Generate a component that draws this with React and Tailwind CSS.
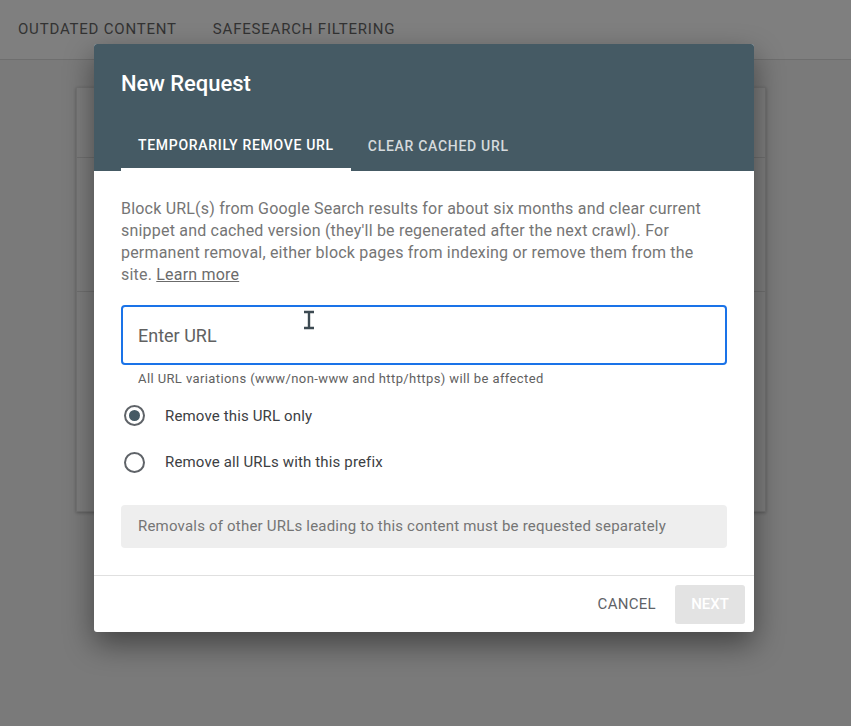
import React, { useState } from 'react';

function Radio({ checked, label, onClick }) {
  return (
    <button type="button" onClick={onClick} className="flex items-center text-left">
      <span className="w-[21px] h-[21px] rounded-full border-2 border-[#5f6368] flex items-center justify-center ml-[3px]">
        {checked && <span className="w-[11px] h-[11px] rounded-full bg-[#455a64]" />}
      </span>
      <span className="ml-[20px] text-[15px] tracking-[0.15px] text-[#3c4043]">{label}</span>
    </button>
  );
}

export default function App() {
  const [mode, setMode] = useState('url');

  return (
    <div
      className="relative w-[851px] h-[726px] overflow-hidden bg-[#7a7a7a]"
      style={{ fontFamily: 'Roboto, "Noto Sans", sans-serif' }}
    >
      {/* page behind the scrim */}
      <div className="h-[60px] bg-[#7f7f7f] border-b border-[#6e6e6e] flex items-center pl-[18px] gap-[36px] text-[15px] tracking-[0.8px] text-[#333333]">
        <span>OUTDATED CONTENT</span>
        <span>SAFESEARCH FILTERING</span>
      </div>
      <div className="ml-[76px] mt-[27px] w-[690px] h-[425px] bg-[#7e7e7e] border border-[#727272] shadow-[0_1px_3px_rgba(0,0,0,0.25)] flex flex-col">
        <div className="h-[70px] border-b border-[#707070]" />
        <div className="h-[134px] border-b border-[#707070]" />
        <div className="flex-1" />
      </div>

      {/* dialog */}
      <div className="absolute left-[94px] top-[44px] w-[660px] bg-white rounded-[3px] overflow-hidden shadow-[0_12px_30px_rgba(0,0,0,0.45)]">
        <div className="bg-[#455a64] pt-[26px] px-[27px]">
          <h2 className="text-[22px] leading-[28px] font-medium text-white">New Request</h2>
          <div className="mt-[21px] flex h-[52px] text-[14px] font-medium tracking-[0.7px]">
            <div className="px-[17px] flex items-center border-b-[3px] border-white text-white pt-[3px]">
              TEMPORARILY REMOVE URL
            </div>
            <div className="px-[17px] flex items-center text-[#d5dadd] pt-[3px]">
              CLEAR CACHED URL
            </div>
          </div>
        </div>

        <div className="px-[27px] pt-[27px] pb-[27px]">
          <p className="text-[16px] leading-[22px] tracking-[0.2px] text-[#757575]">
            Block URL(s) from Google Search results for about six months and clear current snippet and cached
            version (they'll be regenerated after the next crawl). For permanent removal, either block pages from
            indexing or remove them from the site. <a href="#" className="underline text-[#6b6b6b]">Learn more</a>
          </p>

          <div className="relative mt-[19px] h-[60px] border-2 border-[#1a73e8] rounded-[4px] flex items-center pl-[15px]">
            <input
              className="w-full h-full outline-none text-[18px] text-[#202124] placeholder:text-[#616161] bg-transparent"
              placeholder="Enter URL"
            />
            {/* mouse I-beam */}
            <svg className="absolute left-[179px] top-[3px] pointer-events-none" width="14" height="20" viewBox="0 0 14 20">
              <path d="M2 2h10M7 2v16M2 18h10" stroke="#3d4a52" strokeWidth="2.4" fill="none" />
            </svg>
          </div>
          <p className="mt-[4px] pl-[17px] text-[13px] tracking-[0.4px] text-[#616161]">
            All URL variations (www/non-www and http/https) will be affected
          </p>

          <div className="mt-[16px] flex flex-col gap-[24px]">
            <Radio checked={mode === 'url'} label="Remove this URL only" onClick={() => setMode('url')} />
            <Radio checked={mode === 'prefix'} label="Remove all URLs with this prefix" onClick={() => setMode('prefix')} />
          </div>

          <div className="mt-[31px] h-[43px] rounded-[4px] bg-[#eeeeee] flex items-center pl-[17px] text-[15px] tracking-[0.2px] text-[#757575]">
            Removals of other URLs leading to this content must be requested separately
          </div>
        </div>

        <div className="border-t border-[#e0e0e0] h-[57px] flex items-start justify-end pt-[9px] pr-[9px] gap-[19px]">
          <button type="button" className="h-[39px] flex items-center text-[15px] text-[#5f6368] tracking-[0.3px]">CANCEL</button>
          <button type="button" disabled className="w-[70px] h-[39px] rounded-[3px] bg-[#e3e3e3] text-[15px] font-medium text-white">
            NEXT
          </button>
        </div>
      </div>
    </div>
  );
}
